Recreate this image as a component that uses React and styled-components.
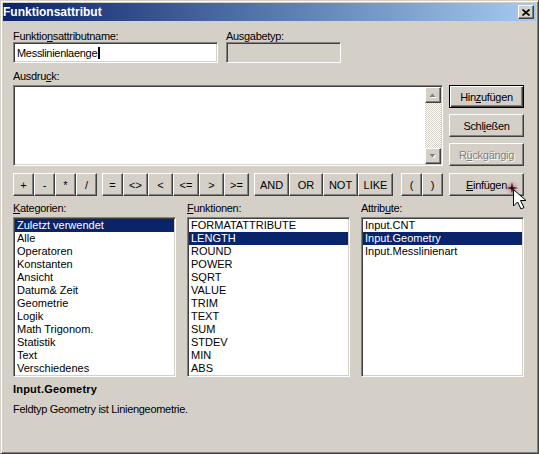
import React from "react";
import styled, { createGlobalStyle } from "styled-components";

const GlobalStyle = createGlobalStyle`
  html, body { margin: 0; padding: 0; background: #d4d0c8; }
  body {
    font-family: "Liberation Sans", Arial, sans-serif;
    font-size: 11px;
    color: #000;
  }
  * { box-sizing: border-box; }
`;

const face = "#d4d0c8";

const raised = `
  border: 1px solid;
  border-color: #fff #404040 #404040 #fff;
  box-shadow: inset -1px -1px #808080;
  background: ${face};
`;

const sunken = `
  border: 1px solid;
  border-color: #808080 #fff #fff #808080;
  box-shadow: inset 1px 1px #404040, inset -1px -1px ${face};
`;

const Window = styled.div`
  position: relative;
  width: 539px;
  height: 454px;
  background: ${face};
  border: 1px solid;
  border-color: ${face} #404040 #404040 ${face};
  box-shadow: inset 1px 1px #fff, inset -1px -1px #808080;
  padding: 2px;
  overflow: hidden;
`;

const TitleBar = styled.div`
  height: 18px;
  display: flex;
  align-items: center;
  justify-content: space-between;
  padding: 0 2px 0 0;
  background: linear-gradient(to right, #0a246a, #a6caf0);
`;

const Title = styled.span`
  color: #fff;
  font-weight: bold;
  font-size: 12px;
  line-height: 18px;
`;

const CloseButton = styled.div`
  ${raised}
  width: 16px;
  height: 14px;
  display: flex;
  align-items: center;
  justify-content: center;
`;

const Body = styled.div`
  padding: 9px 12px 0 10px;
`;

const TopRow = styled.div`
  display: flex;
  gap: 8px;
`;

const Field = styled.div`
  display: flex;
  flex-direction: column;
  width: ${(p) => p.$w}px;
`;

const Label = styled.div`
  height: 12px;
  line-height: 12px;
  letter-spacing: -0.3px;
  white-space: nowrap;
  margin-top: ${(p) => p.$mt || 0}px;
`;

const Key = styled.u`
  text-underline-offset: 1px;
`;

const TextInput = styled.div`
  ${sunken}
  height: 21px;
  display: flex;
  align-items: center;
  padding: 0 3px;
  letter-spacing: -0.3px;
  background: ${(p) => (p.$disabled ? face : "#fff")};
`;

const Caret = styled.span`
  display: inline-block;
  width: 2px;
  height: 12px;
  margin-left: 1px;
  background: #000;
`;

const MidGrid = styled.div`
  margin-top: 3px;
  display: grid;
  grid-template-columns: 430px 75px;
  grid-template-rows: 81px 23px;
  column-gap: 6px;
  row-gap: 7px;
`;

const TextArea = styled.div`
  ${sunken}
  background: #fff;
  padding: 1px;
  display: flex;
  justify-content: flex-end;
`;

const ScrollBar = styled.div`
  width: 16px;
  height: 100%;
  display: flex;
  flex-direction: column;
`;

const ScrollButton = styled.div`
  ${raised}
  width: 16px;
  height: 16px;
  display: flex;
  align-items: center;
  justify-content: center;
`;

const ScrollTrack = styled.div`
  flex: 1;
  background: repeating-conic-gradient(#fff 0 25%, ${face} 0 50%) 0 0 / 2px 2px;
`;

const SideButtons = styled.div`
  display: flex;
  flex-direction: column;
  gap: 6px;
`;

const Button = styled.div`
  ${raised}
  width: 75px;
  height: 23px;
  display: flex;
  align-items: center;
  justify-content: center;
  letter-spacing: -0.3px;
  white-space: nowrap;
  ${(p) =>
    p.$default &&
    `
    border: 1px solid #000;
    box-shadow: inset 1px 1px #fff, inset -1px -1px #404040, inset -2px -2px #808080;
  `}
  ${(p) =>
    p.$disabled &&
    `
    color: #808080;
    text-shadow: 1px 1px #fff;
  `}
`;

const OpsRow = styled.div`
  display: flex;
`;

const OpGroup = styled.div`
  display: flex;
  margin-left: ${(p) => p.$gap || 0}px;
`;

const OpButton = styled.div`
  ${raised}
  width: ${(p) => p.$w}px;
  height: 23px;
  display: flex;
  align-items: center;
  justify-content: center;
  white-space: nowrap;
`;

const ListsRow = styled.div`
  margin-top: 6px;
  display: grid;
  grid-template-columns: repeat(3, 163px);
  column-gap: 11px;
`;

const ListColumn = styled.div`
  display: flex;
  flex-direction: column;
`;

const ListBox = styled.div`
  ${sunken}
  margin-top: 3px;
  height: 160px;
  background: #fff;
  padding: 1px;
  overflow: hidden;
`;

const ListItem = styled.div`
  height: 13px;
  line-height: 13px;
  padding-left: 2px;
  white-space: nowrap;
  background: ${(p) => (p.$selected ? "#0a246a" : "transparent")};
  color: ${(p) => (p.$selected ? "#fff" : "#000")};
`;

const InfoTitle = styled.div`
  margin-top: 6px;
  height: 12px;
  line-height: 12px;
  font-weight: bold;
  letter-spacing: 0.2px;
`;

const InfoText = styled.div`
  margin-top: 8px;
  height: 12px;
  line-height: 12px;
  letter-spacing: -0.3px;
`;

const Pointer = styled.svg`
  position: absolute;
  left: 502px;
  top: 178px;
  pointer-events: none;
`;

const categories = [
  "Zuletzt verwendet",
  "Alle",
  "Operatoren",
  "Konstanten",
  "Ansicht",
  "Datum& Zeit",
  "Geometrie",
  "Logik",
  "Math Trigonom.",
  "Statistik",
  "Text",
  "Verschiedenes",
];

const functions = [
  "FORMATATTRIBUTE",
  "LENGTH",
  "ROUND",
  "POWER",
  "SQRT",
  "VALUE",
  "TRIM",
  "TEXT",
  "SUM",
  "STDEV",
  "MIN",
  "ABS",
];

const attributes = ["Input.CNT", "Input.Geometry", "Input.Messlinienart"];

const opGroups = [
  { gap: 0, ops: [["+", 21], ["-", 21], ["*", 21], ["/", 21]] },
  { gap: 5, ops: [["=", 21], ["<>", 25], ["<", 25], ["<=", 26], [">", 25], [">=", 25]] },
  { gap: 5, ops: [["AND", 35], ["OR", 34], ["NOT", 35], ["LIKE", 35]] },
  { gap: 8, ops: [["(", 21], [")", 21]] },
];

const Arrow = ({ up }) => (
  <svg width="8" height="5" viewBox="0 0 8 5">
    <polygon
      points={up ? "1.5,5 4.5,1.5 7.5,5" : "1.5,1 4.5,4.5 7.5,1"}
      fill="#fff"
    />
    <polygon
      points={up ? "0.5,4 3.5,0.5 6.5,4" : "0.5,0 3.5,3.5 6.5,0"}
      fill="#808080"
    />
  </svg>
);

const List = ({ items, selected }) => (
  <ListBox>
    {items.map((item) => (
      <ListItem key={item} $selected={item === selected}>
        {item}
      </ListItem>
    ))}
  </ListBox>
);

export default function App() {
  return (
    <>
      <GlobalStyle />
      <Window>
        <TitleBar>
          <Title>Funktionsattribut</Title>
          <CloseButton>
            <svg width="8" height="7" viewBox="0 0 8 7">
              <path d="M0.5 0.5 L7.5 6.5 M7.5 0.5 L0.5 6.5" stroke="#000" strokeWidth="1.6" />
            </svg>
          </CloseButton>
        </TitleBar>

        <Body>
          <TopRow>
            <Field $w={205}>
              <Label>
                Funktio<Key>n</Key>sattributname:
              </Label>
              <TextInput>
                Messlinienlaenge
                <Caret />
              </TextInput>
            </Field>
            <Field $w={115}>
              <Label>Ausgabetyp:</Label>
              <TextInput $disabled />
            </Field>
          </TopRow>

          <Label $mt={7}>
            Ausdru<Key>c</Key>k:
          </Label>
          <MidGrid>
            <TextArea>
              <ScrollBar>
                <ScrollButton>
                  <Arrow up />
                </ScrollButton>
                <ScrollTrack />
                <ScrollButton>
                  <Arrow />
                </ScrollButton>
              </ScrollBar>
            </TextArea>
            <SideButtons>
              <Button $default>
                Hin<Key>z</Key>ufügen
              </Button>
              <Button>
                Schl<Key>i</Key>eßen
              </Button>
              <Button $disabled>
                R<Key>ü</Key>ckgängig
              </Button>
            </SideButtons>
            <OpsRow>
              {opGroups.map((group, i) => (
                <OpGroup key={i} $gap={group.gap}>
                  {group.ops.map(([label, w]) => (
                    <OpButton key={label} $w={w}>
                      {label}
                    </OpButton>
                  ))}
                </OpGroup>
              ))}
            </OpsRow>
            <Button>
              <Key>E</Key>infügen
            </Button>
          </MidGrid>

          <ListsRow>
            <ListColumn>
              <Label>
                <Key>K</Key>ategorien:
              </Label>
              <List items={categories} selected="Zuletzt verwendet" />
            </ListColumn>
            <ListColumn>
              <Label>
                <Key>F</Key>unktionen:
              </Label>
              <List items={functions} selected="LENGTH" />
            </ListColumn>
            <ListColumn>
              <Label>
                Attrib<Key>u</Key>te:
              </Label>
              <List items={attributes} selected="Input.Geometry" />
            </ListColumn>
          </ListsRow>

          <InfoTitle>Input.Geometry</InfoTitle>
          <InfoText>Feldtyp Geometry ist Liniengeometrie.</InfoText>
        </Body>

        {/* mouse pointer over the Einfügen button */}
        <Pointer width="30" height="34" viewBox="0 0 30 34">
          <defs>
            <radialGradient id="glow">
              <stop offset="0" stopColor="#c04060" stopOpacity="0.7" />
              <stop offset="1" stopColor="#e0a0b0" stopOpacity="0" />
            </radialGradient>
          </defs>
          <circle cx="9" cy="9" r="8" fill="url(#glow)" />
          <path d="M9 3 L10 8 L15 9 L10 10 L9 15 L8 10 L3 9 L8 8 Z" fill="#301018" />
          <path
            d="M10.5 10.5 L10.5 27 L14.5 23 L18 30 L21 28.5 L17.5 21.5 L23 21.5 Z"
            fill="#fff"
            stroke="#000"
            strokeWidth="1"
            strokeLinejoin="miter"
          />
        </Pointer>
      </Window>
    </>
  );
}
